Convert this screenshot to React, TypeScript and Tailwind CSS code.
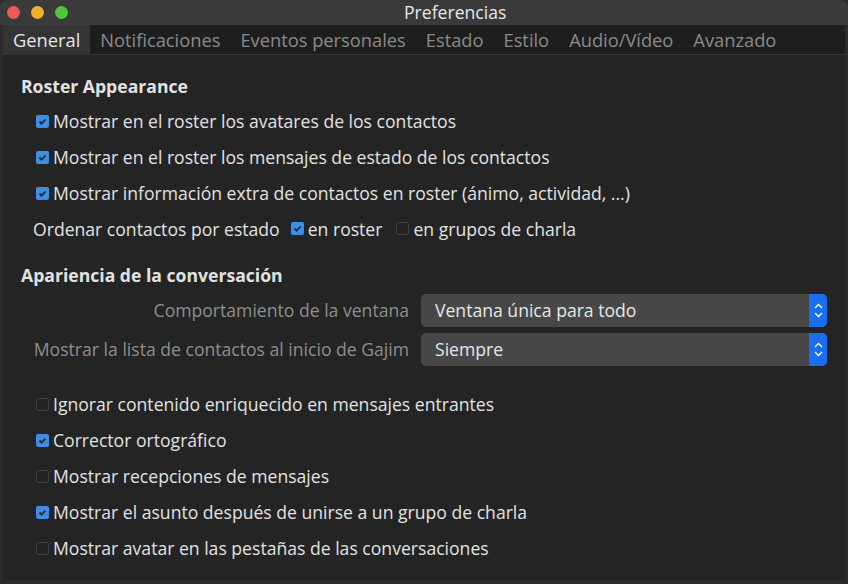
import React from "react";

const tabs = ["General", "Notificaciones", "Eventos personales", "Estado", "Estilo", "Audio/Vídeo", "Avanzado"];

function Check({ on }: { on: boolean }) {
  return on ? (
    <span className="w-[13px] h-[13px] rounded-[2px] bg-[#3d8ee6] flex items-center justify-center shrink-0">
      <svg width="9" height="9" viewBox="0 0 9 9">
        <path d="M1.5 4.5 L3.6 6.6 L7.5 2.5" stroke="#1e2a38" strokeWidth="1.8" fill="none" />
      </svg>
    </span>
  ) : (
    <span className="w-[13px] h-[13px] rounded-[2px] border border-[#3f3f3f] bg-[#232323] shrink-0" />
  );
}

function Row({ on, label }: { on: boolean; label: string }) {
  return (
    <div className="h-[36px] flex items-center gap-[4px] pl-[33px]">
      <Check on={on} />
      <span>{label}</span>
    </div>
  );
}

function Combo({ label, value }: { label: string; value: string }) {
  return (
    <div className="flex items-center h-[34px]">
      <div className="w-[406px] text-right text-[#8e8e8e]">{label}</div>
      <div className="ml-[12px] w-[406px] h-[33px] rounded-[5px] bg-[#474747] flex items-center overflow-hidden">
        <span className="flex-1 pl-[14px] text-[#e8e8e8]">{value}</span>
        <span className="w-[18px] h-full bg-[#1a6ff0] flex flex-col items-center justify-center gap-[3px]">
          <svg width="9" height="6" viewBox="0 0 9 6"><path d="M1 5 L4.5 1.5 L8 5" stroke="#fff" strokeWidth="1.4" fill="none" /></svg>
          <svg width="9" height="6" viewBox="0 0 9 6"><path d="M1 1 L4.5 4.5 L8 1" stroke="#fff" strokeWidth="1.4" fill="none" /></svg>
        </span>
      </div>
    </div>
  );
}

export default function App() {
  return (
    <div className="w-[848px] h-[584px] bg-[#2b2b2b] flex flex-col text-[17.6px] text-[#e2e2e2] overflow-hidden" style={{ fontFamily: "'Open Sans', 'Noto Sans', sans-serif" }}>
      {/* title bar */}
      <div className="h-[25px] bg-[#3a3a3a] rounded-t-[8px] relative flex items-center shrink-0">
        <div className="flex gap-[11px] pl-[7px]">
          <span className="w-[13px] h-[13px] rounded-full bg-[#ec5a53]" />
          <span className="w-[13px] h-[13px] rounded-full bg-[#f2b12a]" />
          <span className="w-[13px] h-[13px] rounded-full bg-[#4fc53c]" />
        </div>
        <div className="absolute left-[404px] top-0 h-full flex items-center text-[#e8e8e8]">Preferencias</div>
      </div>

      <div className="flex-1 flex flex-col mx-[3px] mb-[4px] bg-[#242424]">
        {/* tabs */}
        <div className="h-[30px] bg-[#1e1e1e] border-b border-[#333] flex items-stretch shrink-0 text-[18.3px]">
          {tabs.map((t, i) => (
            <div key={t} className={`flex items-center px-[10px] ${i === 0 ? "bg-[#343434] text-[#e6e6e6]" : "text-[#8a8a8a]"}`}>
              {t}
            </div>
          ))}
        </div>

        {/* content */}
        <div className="flex flex-col pt-[14px]">
          <div className="pl-[18px] font-bold h-[34px] flex items-center">Roster Appearance</div>
          <Row on label="Mostrar en el roster los avatares de los contactos" />
          <Row on label="Mostrar en el roster los mensajes de estado de los contactos" />
          <Row on label="Mostrar información extra de contactos en roster (ánimo, actividad, ...)" />
          <div className="h-[36px] flex items-center pl-[30px]">
            <span>Ordenar contactos por estado</span>
            <span className="ml-[11px] flex items-center gap-[4px]"><Check on /><span>en roster</span></span>
            <span className="ml-[14px] flex items-center gap-[4px]"><Check on={false} /><span>en grupos de charla</span></span>
          </div>
          <div className="pl-[18px] font-bold h-[36px] flex items-center mt-[10px]">Apariencia de la conversación</div>
          <div className="flex flex-col gap-[5px]">
            <Combo label="Comportamiento de la ventana" value="Ventana única para todo" />
            <Combo label="Mostrar la lista de contactos al inicio de Gajim" value="Siempre" />
          </div>
          <div className="h-[20px]" />
          <Row on={false} label="Ignorar contenido enriquecido en mensajes entrantes" />
          <Row on label="Corrector ortográfico" />
          <Row on={false} label="Mostrar recepciones de mensajes" />
          <Row on label="Mostrar el asunto después de unirse a un grupo de charla" />
          <Row on={false} label="Mostrar avatar en las pestañas de las conversaciones" />
        </div>
      </div>
    </div>
  );
}
